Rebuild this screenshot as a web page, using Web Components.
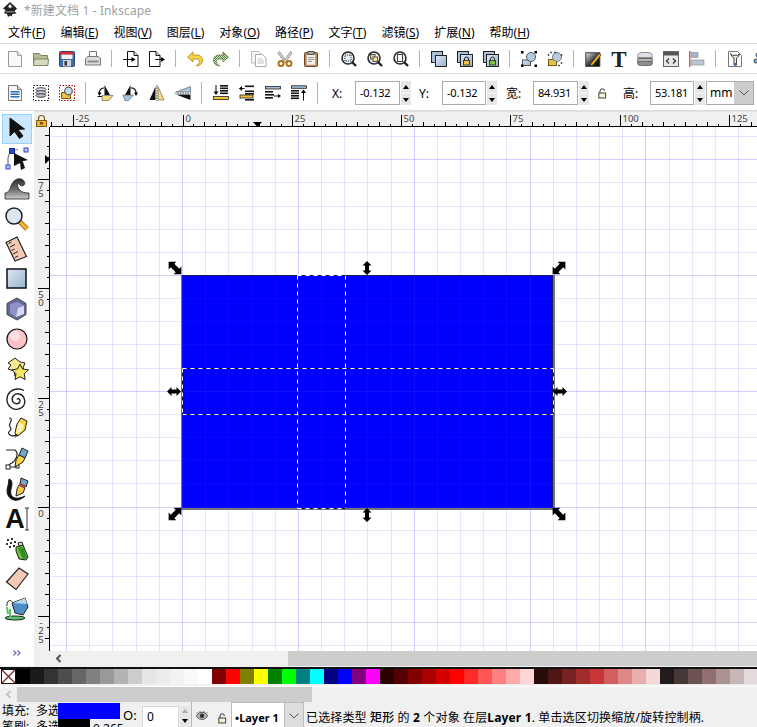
<!DOCTYPE html>
<html lang="zh"><head><meta charset="utf-8"><title>Inkscape</title>
<style>
html,body{margin:0;padding:0;background:#fff}
body{width:757px;height:727px;overflow:hidden;display:flex;flex-direction:column;font:12px "Noto Sans","Noto Sans CJK SC",sans-serif;color:#000}
</style></head><body>
<ink-title>*新建文档 1 - Inkscape</ink-title>
<ink-menubar>
 <ink-menu label="文件" key="F"></ink-menu><ink-menu label="编辑" key="E"></ink-menu><ink-menu label="视图" key="V"></ink-menu><ink-menu label="图层" key="L"></ink-menu><ink-menu label="对象" key="O"></ink-menu><ink-menu label="路径" key="P"></ink-menu><ink-menu label="文字" key="T"></ink-menu><ink-menu label="滤镜" key="S"></ink-menu><ink-menu label="扩展" key="N"></ink-menu><ink-menu label="帮助" key="H"></ink-menu>
</ink-menubar>
<ink-toolbar style="height:29px">
 <ink-ti n="new"></ink-ti><ink-ti n="open"></ink-ti><ink-ti n="save"></ink-ti><ink-ti n="print"></ink-ti><ink-sep></ink-sep>
 <ink-ti n="import"></ink-ti><ink-ti n="export"></ink-ti><ink-sep></ink-sep>
 <ink-ti n="undo"></ink-ti><ink-ti n="redo"></ink-ti><ink-sep></ink-sep>
 <ink-ti n="copy"></ink-ti><ink-ti n="cut"></ink-ti><ink-ti n="paste"></ink-ti><ink-sep></ink-sep>
 <ink-ti n="zsel"></ink-ti><ink-ti n="zdraw"></ink-ti><ink-ti n="zpage"></ink-ti><ink-sep></ink-sep>
 <ink-ti n="dup"></ink-ti><ink-ti n="clone"></ink-ti><ink-ti n="unlink"></ink-ti><ink-sep></ink-sep>
 <ink-ti n="group"></ink-ti><ink-ti n="ungroup"></ink-ti><ink-sep></ink-sep>
 <ink-ti n="fs"></ink-ti><ink-ti n="text"></ink-ti><ink-ti n="layers"></ink-ti><ink-ti n="xml"></ink-ti><ink-ti n="align"></ink-ti><ink-sep></ink-sep>
 <ink-ti n="prefs"></ink-ti><ink-ti n="more"></ink-ti>
</ink-toolbar>
<ink-toolbar style="height:34px;padding-top:2px" data-second>
 <ink-ti n="selall"></ink-ti><ink-ti n="sellayers"></ink-ti><ink-ti n="selsame"></ink-ti><ink-sep tall></ink-sep>
 <ink-ti n="rotl"></ink-ti><ink-ti n="rotr"></ink-ti><ink-ti n="fliph"></ink-ti><ink-ti n="flipv"></ink-ti><ink-sep tall></ink-sep>
 <ink-ti n="top"></ink-ti><ink-ti n="raise"></ink-ti><ink-ti n="lower"></ink-ti><ink-ti n="bottom"></ink-ti><ink-sep tall></ink-sep>
 <ink-field label="X:" value="-0.132" lw="23" w="45" ml="8"></ink-field>
 <ink-field label="Y:" value="-0.132" lw="23" w="44" ml="8"></ink-field>
 <ink-field label="宽:" value="84.931" lw="27" w="45" ml="9"></ink-field>
 <ink-ti n="lock" style="width:24px;margin-left:1px"></ink-ti>
 <ink-field label="高:" value="53.181" lw="27" w="44" ml="9"></ink-field>
 <ink-combo value="mm" w="27" aw="19"></ink-combo>
</ink-toolbar>
<ink-workspace></ink-workspace>
<ink-palette></ink-palette>
<ink-hscroll disabled thumb-left="17" thumb-width="295" style="background:#f0f0f0"></ink-hscroll>
<ink-status></ink-status>
<script>
const grad=`<defs>
<linearGradient id="b" x1="0" y1="0" x2="1" y2="1"><stop offset="0" stop-color="#dfe8f2"/><stop offset="1" stop-color="#94b2cf"/></linearGradient>
<linearGradient id="k" x1="0" y1="0" x2="1" y2="1"><stop offset="0" stop-color="#eee"/><stop offset=".55" stop-color="#333"/><stop offset="1" stop-color="#000"/></linearGradient>
<linearGradient id="g" x1="0" y1="0" x2="0" y2="1"><stop offset="0" stop-color="#333"/><stop offset=".5" stop-color="#666"/><stop offset="1" stop-color="#ccc"/></linearGradient>
<pattern id="d" width="2" height="2" patternUnits="userSpaceOnUse"><rect width="2" height="2" fill="#dfe8d0"/><rect width="1" height="1" fill="#4e7a36"/><rect x="1" y="1" width="1" height="1" fill="#4e7a36"/></pattern>
</defs>`;
const lockI=(x,y,c)=>`<path d="M${x+1.5} ${y+3}v-1.5a2 2 0 0 1 4 0V${y+3}" fill="none" stroke="#222"/><rect x="${x+.5}" y="${y+3}" width="6" height="4.5" fill="${c}" stroke="#222" stroke-width=".8"/>`;
const mag=(inner)=>`<path d="M10.5 10.5l4.5 4.5" stroke="#222" stroke-width="2.4"/><circle cx="7" cy="7" r="6" fill="#e6edf3" stroke="#222" stroke-width="1.5"/>${inner}`;
const I={
new:`<path d="M1.5.5h9l4 4v11h-13z" fill="#f9f9f9" stroke="#999"/><path d="M10.5.5v4h4" fill="#e4e4e4" stroke="#aaa"/>`,
open:`<path d="M.5 14V2.500h6l1.500 2h6.500v9.500z" fill="#b5bc98" stroke="#7d8468"/><path d="M.5 14.500l.6-6.500h14.400l-.6 6.500z" fill="#d6dabf" stroke="#7d8468"/>`,
save:`<rect x=".5" y=".5" width="15" height="15" rx="1" fill="#3f6dae" stroke="#24467c"/><rect x="1" y="1" width="14" height="2.600" fill="#dc2a2e"/><rect x="2.500" y="3.600" width="11" height="4.400" fill="#f2f2f2"/><rect x="4" y="9" width="8" height="6.500" fill="#cfd3d8"/><rect x="5.500" y="10" width="2.500" height="4.500" fill="#333"/>`,
print:`<path d="M4.500.5h7v5h-7z" fill="#fff" stroke="#777"/><path d="M.5 7.500l2.500-2h10l2.500 2v6.500H.5z" fill="#dcdcdc" stroke="#777"/><rect x="2.500" y="9.500" width="11" height="2" fill="#8a8a8a"/>`,
import:`<path d="M4.500.5h6.500l4 4v11H4.500z" fill="#fff" stroke="#111"/><path d="M11 .5v4h4" fill="#ddd" stroke="#111"/><path d="M0 8.500h10" stroke="#111"/><path d="M8.500 6l4 2.500-4 2.500z"/>`,
export:`<path d="M.5.5h6.500l4 4v11H.5z" fill="#fff" stroke="#111"/><path d="M7 .5v4h4" fill="#ddd" stroke="#111"/><path d="M6 8.500h7" stroke="#111"/><path d="M12 6l4 2.500-4 2.500z"/>`,
undo:`<path d="M6 .8L.6 6.200 6 11V8h3.500c2 0 3 1 3 2.400s-1 3-3.200 4.400c4 0 6.200-2.800 6.200-5.500C15.500 6 13 4 9.500 4H6z" fill="#f3d247" stroke="#b7991c"/>`,
redo:`<path d="M10 .8l5.400 5.400L10 11V8H6.500c-2 0-3 1-3 2.400s1 3 3.200 4.400C2.700 14.800.5 12 .5 9.300.5 6 3 4 6.500 4H10z" fill="url(#d)" stroke="#6f8f58"/>`,
copy:`<path d="M.5.5h7l2.500 2.500v9H.5z" fill="#f6f6f6" stroke="#bbb"/><path d="M4.500 3.500h7l3.500 3.500v8.500H4.500z" fill="#fff" stroke="#aaa"/><path d="M6.500 8h5M6.500 10h6.500M6.500 12h6.500" stroke="#c4c4c4"/>`,
cut:`<path d="M2.500.5L9.500 10.500 7.500 11.500 1 2z" fill="#d0d0d0" stroke="#999"/><path d="M13.500.5L6.500 10.500 8.500 11.500 15 2z" fill="#d8d8d8" stroke="#999"/><circle cx="4" cy="12.500" r="2.500" fill="#fff" stroke="#b2701b" stroke-width="2"/><circle cx="12" cy="12.500" r="2.500" fill="#fff" stroke="#b2701b" stroke-width="2"/>`,
paste:`<rect x="1.500" y="1.500" width="13" height="14" rx="1" fill="#b58a55" stroke="#6e4a20"/><rect x="3.500" y="3.500" width="9" height="10.500" fill="#f5f1e6" stroke="#a89a80" stroke-width=".5"/><rect x="5" y=".5" width="6" height="3" fill="#aaa" stroke="#555"/><path d="M5 6.500h6M5 8.500h6M5 10.500h4" stroke="#999"/>`,
zsel:mag(`<rect x="4" y="4" width="6" height="6" fill="none" stroke="#222" stroke-dasharray="1 1"/>`),
zdraw:mag(`<rect x="3.500" y="3.500" width="4.500" height="4.500" fill="#f0d060" stroke="#555"/><rect x="6" y="6" width="4.500" height="4.500" fill="#f4e8a0" stroke="#555"/>`),
zpage:mag(`<rect x="4.500" y="3.500" width="5" height="7" fill="#fff" stroke="#444"/>`),
dup:`<rect x=".5" y=".5" width="11" height="11" fill="#a7c0d8" stroke="#222"/><rect x="4.500" y="4.500" width="11" height="11" fill="url(#b)" stroke="#222"/>`,
clone:`<rect x=".5" y=".5" width="11" height="11" fill="#a7c0d8" stroke="#222"/><rect x="3.500" y="3.500" width="12" height="12" fill="url(#b)" stroke="#222"/>${lockI(6,6.5,'#f2c63c')}`,
unlink:`<rect x=".5" y=".5" width="11" height="11" fill="#a7c0d8" stroke="#222"/><rect x="3.500" y="3.500" width="12" height="12" fill="url(#b)" stroke="#222"/>${lockI(6,6.5,'#7fc241')}`,
group:`<rect x="1.500" y="9" width="8" height="5.500" fill="url(#b)" stroke="#555"/><circle cx="10" cy="6" r="4.500" fill="#b5cbe0" stroke="#555"/><path d="M0 0h2.500v2.500H0zM13.500 0H16v2.500h-2.500zM0 13.500h2.500V16H0zM13.500 13.500H16V16h-2.500z"/>`,
ungroup:`<rect x="1.500" y="8.500" width="8" height="6" fill="#e8c04a" stroke="#6a5a20"/><circle cx="10" cy="6" r="4.500" fill="#b5cbe0" stroke="#777"/><path d="M3 1.500h2M7 1.500h2M1.500 3v2M14.500 3v2M14.500 11v2M11 14.500h2" stroke="#555" stroke-width="1.500"/>`,
fs:`<rect x=".8" y="1.800" width="14" height="13.500" fill="url(#k)" stroke="#333"/><path d="M6 12.500L14 2.500l2 1.500-8 10-3 1z" fill="#f2b21d" stroke="#222" stroke-width=".6"/>`,
text:`<text x="8" y="15.500" text-anchor="middle" font-family="Liberation Serif" font-weight="700" font-size="23" fill="#222">T</text>`,
layers:`<path d="M.8 4.500C.8 2.500 3 1.500 6 1.500h4c3 0 5.200 1 5.200 3v2H.8z" fill="#dce2e8" stroke="#8a8a8a"/><path d="M.8 7.500h14.400v3H.8z" fill="#b5b5b5" stroke="#6a6a6a"/><path d="M.8 10.500h14.400V13c0 1-2 1.500-4 1.500H4.800c-2 0-4-.5-4-1.500z" fill="#8f8f8f" stroke="#6a6a6a"/>`,
xml:`<rect x=".5" y=".5" width="15" height="15" fill="#e7e7e7" stroke="#666"/><rect x="1" y="1" width="14" height="3.500" fill="#555"/><path d="M6 7.500L3.500 10 6 12.500M10 7.500l2.500 2.500-2.500 2.500" fill="none" stroke="#333" stroke-width="1.200"/>`,
align:`<rect x="0" y="0" width="1.500" height="16" fill="#e25c5c"/><rect x="2" y="1.500" width="7" height="5" fill="#9fb8ce" stroke="#888" stroke-width=".6"/><rect x="2" y="9" width="13" height="5" fill="#b8c8d6" stroke="#888" stroke-width=".6"/>`,
prefs:`<path d="M1.500.5h9l4 4v11h-13z" fill="#fff" stroke="#777"/><path d="M3.500 2.500l1.500 3 2 1.500v7h2.500V7l2-1.500 1.200-3-2 1.800H5.500z" fill="#e8e8e8" stroke="#333" stroke-width=".9"/><path d="M7 12h2.500v2.500H7z" fill="#2d67b2"/>`,
more:`<circle cx="5" cy="4" r="2" fill="#8fb4d8" stroke="#345"/><circle cx="3" cy="10" r="2" fill="#8fb4d8" stroke="#345"/><circle cx="8" cy="13" r="2" fill="#8fb4d8" stroke="#345"/>`,
lock:`<g transform="translate(4 3)"><path d="M2 5V3a2.200 2.200 0 0 1 4.400 0" fill="none" stroke="#333"/><rect x=".8" y="5" width="6.800" height="5" fill="#f6efcf" stroke="#444"/></g>`,
eye:`<path d="M.5 8c2-3.500 4-5 7.500-5s5.500 1.500 7.500 5c-2 3-4 4.500-7.500 4.500S2.500 11 .5 8z" fill="#bbb" stroke="#333"/><circle cx="8" cy="7.500" r="3" fill="#333"/><path d="M1 3l2 2M5 1.500l1 2.500M11 1.500L10 4M15 3l-2 2" stroke="#333"/>`,
selall:`<path d="M1.500.5h9l4 4v11h-13z" fill="#f4f6f8" stroke="#777"/><path d="M10.500.5v4h4" fill="#d0d6dc" stroke="#777"/><path d="M3.500 6h9v1.500h-9zM3.500 8.500h9V10h-9zM3.500 11h9v1.500h-9z" fill="#2e6cb4"/>`,
sellayers:`<rect x=".5" y=".5" width="15" height="15" fill="none" stroke="#111" stroke-dasharray="1.500 1.500"/><ellipse cx="8" cy="4.500" rx="5" ry="1.800" fill="#dde" stroke="#444"/><ellipse cx="8" cy="7.500" rx="5" ry="1.800" fill="#ccd" stroke="#444"/><ellipse cx="8" cy="10.500" rx="5" ry="1.800" fill="#bbc" stroke="#444"/>`,
selsame:`<rect x=".5" y=".5" width="15" height="15" fill="none" stroke="#c00000" stroke-dasharray="1.500 1.500"/><path d="M2.500 7.500h5l1 1h3v5h-9z" fill="#f0c040" stroke="#7a5a14"/><circle cx="9.500" cy="6" r="3.800" fill="#c6d9ea" stroke="#555" stroke-width="1.200"/>`,
rotl:`<path d="M7.500 0L13 10H7.500z" fill="#111"/><path d="M5 10.500h11l-4 5H5z" fill="#f4da7e" stroke="#555" stroke-width=".6"/><path d="M7 3A4.500 4.500 0 0 0 2.500 9" fill="none" stroke="#111" stroke-width="1.200"/><path d="M.5 7.500h4L2.500 11z"/><path d="M.5 11.500h4.500" stroke="#111"/>`,
rotr:`<path d="M7.500 0L2 10h5.500z" fill="#111"/><path d="M0 10h10.500l-5 5.500H2z" fill="#a9c4dd" stroke="#555" stroke-width=".6"/><path d="M8 3a4.500 4.500 0 0 1 5 5" fill="none" stroke="#111" stroke-width="1.200"/><path d="M11 7.500h4L13 11z"/>`,
fliph:`<path d="M6.500 1.500V15H.5z" fill="#111"/><path d="M9 1.500V15h6z" fill="#f4da7e" stroke="#555" stroke-width=".6"/><path d="M7.800 0v16" stroke="#555" stroke-dasharray="1.500 1"/>`,
flipv:`<path d="M15.500 1.500V7H1z" fill="#a9c4dd" stroke="#555" stroke-width=".6"/><path d="M15.500 15V9.500H1z" fill="#111"/><path d="M0 8.200h16" stroke="#555" stroke-dasharray="1.500 1"/>`,
top:`<path d="M3 0v8" stroke="#111"/><path d="M.5 6.500h5L3 10z"/>${[0,2.5,5,7.5].map(o=>`<rect x="7" y="${o}" width="8" height="1.600" fill="#111"/>`).join('')}<rect x=".5" y="11.500" width="15" height="3" fill="#f0c33c" stroke="#222" stroke-width=".8"/>`,
raise:`<path d="M.5 3.500h5" stroke="#111"/><path d="M3 1L0 3.500 3 6z"/>${[0,5,7.5].map(o=>`<rect x="6" y="${o+.5}" width="9" height="1.600" fill="#111"/>`).join('')}<rect x="1" y="10" width="13" height="3" fill="#f0c33c" stroke="#222" stroke-width=".8"/><rect x="6" y="14" width="9" height="1.600" fill="#111"/>`,
lower:`<rect x=".5" y="1.500" width="15" height="2.500" fill="#9fbdd8" stroke="#222" stroke-width=".8"/>${[6,9,12].map((o,i)=>`<rect x="0" y="${o}" width="${i==1?9:8}" height="1.600" fill="#111"/>`).join('')}<path d="M9 11h4" stroke="#111"/><path d="M13 9v4l3-2z"/>`,
bottom:`<rect x=".5" y=".8" width="15" height="2.500" fill="#9fbdd8" stroke="#222" stroke-width=".8"/>${[5,7.5,10,12.5].map(o=>`<rect x="0" y="${o}" width="8" height="1.600" fill="#111"/>`).join('')}<path d="M12.500 7v8.500" stroke="#111"/><path d="M10 8l2.500-3.500L15 8z"/>`,
padlock:`<path d="M2.500 6V3.500a3 3 0 0 1 6 0V6" fill="none" stroke="#7a5a14" stroke-width="1.200"/><rect x=".5" y="5.500" width="10" height="6" fill="#eeb52e" stroke="#7a5a14"/><rect x="4" y="7" width="3" height="2.500" fill="#7a4a10"/>`,
t_sel:`<path d="M5 1l0 18 4.500-4.500 5 7 3.500-2.500-5-6.500 6.500-.5z" fill="#111" stroke="#111"/>`,
t_node:`<path d="M3 21V12C3 6.500 7 3 13 2.500" fill="none" stroke="#777" stroke-width="1.200"/><rect x="4.500" y="1.500" width="5" height="5" fill="#2a49d8" stroke="#1a2a8a"/><rect x="1" y="18" width="4" height="4" fill="#b8c4ff" stroke="#3344cc"/><rect x="19" y="1" width="4" height="4" fill="#b8c4ff" stroke="#3344cc"/><path d="M9 6l14 7-6 1.500 1 .5 2 6-4 2-1-7-6 3z" fill="#111"/>`,
t_tweak:`<path d="M0 16C3 16 5 13 6 9 8 3 13 1 16 2c3 1 5 4 3 6-2 2-4 0-5-1-2-1-2 2 0 5 2 3 5 4 10 4v6H0z" fill="url(#g)" stroke="#222" stroke-width=".8"/>`,
t_zoom:`<path d="M14 14l8 8" stroke="#a86f10" stroke-width="5"/><path d="M15 15l7 7" stroke="#f5b531" stroke-width="3"/><circle cx="9" cy="9" r="8" fill="#dbe7f2" stroke="#222" stroke-width="1.500"/>`,
t_measure:`<path d="M1 5.500L12 0l9.500 19.500L10 24z" fill="#f3c9b2" stroke="#222" stroke-width="1.200"/><path d="M3.500 6.500l3-1.500M5 10l5-2.500M6.500 13.500l3-1.500M8 17l5-2.500M10 20.500l3-1.500" stroke="#222"/>`,
t_rect:`<rect x="2" y="2" width="19" height="19" fill="url(#b)" stroke="#111" stroke-width="1.500"/>`,
t_3d:`<path d="M12 1l9 5.500v11L12 23l-10-5.500V6.500z" fill="#666a96" stroke="#444"/><path d="M5 7l8-2 6 3.500v8.500l-8 3-6-4z" fill="#8f93c8"/><path d="M13 11l6-2v8l-8 3z" fill="#d7d9f0"/>`,
t_circle:`<circle cx="12" cy="12" r="10" fill="#fbc2c8" stroke="#111" stroke-width="1.200"/><circle cx="10" cy="9" r="5" fill="#fde0e3"/>`,
t_star:`<path d="M3 6l7-5 5 4 5 1-2 5 2 3-7 1-3 4-1-5-6-2 3-4z" fill="#f5ec90" stroke="#222"/><path d="M15 7l2.500 5 6 .8-4.300 4 1 5.700-5.200-2.700-5 2.700 1-5.700-4-4 5.500-.8z" fill="#f7e862" stroke="#222"/>`,
t_spiral:`<path d="M12 12.500c1-2 3.500-.5 3 2-1 3-6 3-7.500-.5-1.500-4.500 2.500-8 6.500-7 5 1 7 6.500 5 11-2 4-9 6-13 2.500C.5 16.500 1 9 5 5 8.500 1.500 15 1 19 3.500" fill="none" stroke="#222" stroke-width="1.400"/>`,
t_pencil:`<path d="M4 1c3 0 3 2 1 5s1 4 1 6-5 3-1 6 9-1 12-3" fill="none" stroke="#222" stroke-width="1.200"/><path d="M16 1l6 3-2 9-7 6-2-1-1-2 2-9z" fill="#f7d23c" stroke="#222"/><path d="M14 5l5 3-2 6-6 3 1-6z" fill="#fff3b8"/><path d="M11 17l2 1-3 3z" fill="#222"/>`,
t_pen:`<path d="M1 3h9c5 4 0 12-5 14-2 .8-1 3-1 3" fill="none" stroke="#222" stroke-width="1.200"/><rect x="1" y="18" width="4" height="4" fill="#fff" stroke="#222"/><rect x="11" y="18" width="3" height="3" fill="#fff" stroke="#222"/><path d="M5 20h6" stroke="#222"/><path d="M17 1l6 3-3 7-6-3z" fill="#6fa7c8" stroke="#222"/><path d="M14 8l6 3-2 4-8 5 1-7z" fill="#f6d347" stroke="#222"/>`,
t_call:`<path d="M4 2c4 1 3 6 2 10s0 8 4 9c3 .8 7-.5 10-2-3 3-8 5-11 4C2 21 1 14 3 9c.7-2 .5-5 1-7z" fill="#111" stroke="#111"/><path d="M16 1l7 3-2 6-6-3z" fill="#6fa7c8" stroke="#222"/><path d="M14.500 6l7 3-.6 1.200-7-3z" fill="#c8202a"/><path d="M14 8l6 3-2 5-7 3 1-7z" fill="#f3ca3c" stroke="#222"/>`,
t_text:`<text x="10" y="21" text-anchor="middle" font-family="Liberation Sans" font-weight="700" font-size="27" fill="#111">A</text><path d="M22 1v22M20 1h4M20 23h4" stroke="#333" fill="none"/>`,
t_spray:`<path d="M11 10l7-2 5 12-2 3-7-1-3-8z" fill="#6ec13d" stroke="#222"/><path d="M13 11l5-1 4 11-4 1z" fill="#2f8f24"/><path d="M13 6l4-1 1 3-4 1z" fill="#ddd" stroke="#222"/><path d="M2 2h2v2H2zM6 1h2v2H6zM1 6h2v2H1zM5 5h2v2H5zM9 4h2v2H9zM4 9h2v2H4zM8 8h2v2H8z" fill="#333"/>`,
t_erase:`<path d="M1.500 15L14 1l9 6-12 15.500z" fill="#f4c9b8" stroke="#222" stroke-width="1.200"/>`,
t_fill:`<ellipse cx="10" cy="21" rx="10" ry="2" fill="#57c267" stroke="#222"/><path d="M2 10l1 7M5 12v8" stroke="#57c267" stroke-width="2"/><path d="M7 6l13-5 3 9-5 8-8-2z" fill="#4d8fc4" stroke="#222"/><path d="M8 6l12-5 2 6z" fill="#bcd8ec"/><path d="M7 5C5 1 1 5 2 9" fill="none" stroke="#222"/>`
};
function def(name,tpl,extra={}){
 const t=document.createElement('template');t.innerHTML=tpl;
 customElements.define(name,class extends HTMLElement{
  constructor(){super();this.attachShadow({mode:'open'}).appendChild(t.content.cloneNode(true));}
  connectedCallback(){extra.init&&extra.init.call(this,this.shadowRoot);}
 });
}
def('ink-icon',`<style>:host{display:inline-flex;line-height:0}svg{display:block;overflow:visible}</style><svg></svg>`,{init(r){
 const n=this.getAttribute('n');if(!n)return;
 const s=+(this.getAttribute('size')||16),v=+(this.getAttribute('box')||s),svg=r.querySelector('svg');
 svg.setAttribute('width',s);svg.setAttribute('height',s);svg.setAttribute('viewBox',`0 0 ${v} ${v}`);
 svg.innerHTML=grad+I[n];
}});
def('ink-ti',`<style>:host{display:flex;flex:none;width:26px;justify-content:center;align-items:center}</style><span></span>`,{init(r){
 const s=r.querySelector('span');s.style.display='contents';
 s.innerHTML=`<ink-icon n="${this.getAttribute('n')}"></ink-icon>`;
}});
def('ink-sep',`<style>:host{display:block;flex:none;width:1px;height:17px;margin:0 6px 0 5px;background:#b4b4b4}:host([tall]){height:22px}</style>`);
def('ink-title',`<style>:host{display:flex;flex:none;height:21px;box-sizing:border-box;padding-bottom:1px;align-items:center;color:#a0a0a0;font:12px "Noto Sans","Noto Sans CJK SC",sans-serif;letter-spacing:.12px;background:#fff}
 svg{margin:0 6px 0 2px;flex:none}</style>
 <svg width="16" height="16" viewBox="0 0 16 16"><path d="M8 0L15 6.500 12.500 9l2 2.500-4 .5-1 2.500-1.500-1-2 1.500-1-3-3-1L3.500 8 1 6.500z" fill="#222"/><path d="M8 2L5.500 5.500 7 5l1 1.500L9.500 5l1.200.8z" fill="#fff"/><path d="M3 9h10l-1 1.500H4z" fill="#777"/></svg><span><slot></slot></span>`);
def('ink-menubar',`<style>:host{display:flex;flex:none;height:22px;padding-left:.5px;box-sizing:content-box;border-bottom:1px solid #dcdcdc;background:#fff}</style><slot></slot>`);
def('ink-menu',`<style>:host{display:block;padding:3px 7.500px 0;flex:none;white-space:nowrap;font-size:12px;line-height:18px}</style><span></span><span>(<u></u>)</span>`,{init(r){
 r.querySelector('span').textContent=this.getAttribute('label');r.querySelector('u').textContent=this.getAttribute('key');
}});
def('ink-toolbar',`<style>:host{display:flex;flex:none;align-items:center;padding-left:2px;background:#fff;border-bottom:1px solid #dcdcdc;overflow:hidden}</style><slot></slot>`);
const spinT=`<span class="spin"><i class="u"></i><i class="d"></i></span>`;
def('ink-field',`<style>:host{display:flex;flex:none;align-items:center;font-size:12px}
 .l{flex:none}.i{box-sizing:border-box;height:24px;border:1px solid #ababab;padding-left:4px;background:#fff;line-height:22px;flex:none;font-size:11px;letter-spacing:-.2px}
 .spin{display:flex;flex-direction:column;justify-content:space-between;width:10px;height:24px;margin:0 0 0 1px;background:#f0f0f0}
 .spin i{display:flex;height:11px;align-items:center;justify-content:center;background:#e6e6e6}
 .spin i::after{content:"";border:3.500px solid transparent;}
 .u::after{border-bottom:4px solid #000!important;border-top-width:0!important}
 .d::after{border-top:4px solid #000!important;border-bottom-width:0!important}
 </style><span class="l"></span><span class="i"></span>${spinT}`,{init(r){
 const l=r.querySelector('.l'),i=r.querySelector('.i');
 l.textContent=this.getAttribute('label');l.style.width=this.getAttribute('lw')+'px';
 i.textContent=this.getAttribute('value');i.style.width=(+this.getAttribute('w'))+'px';
 this.style.marginLeft=this.getAttribute('ml')+'px';
}});
const chev=`<svg width="10" height="6" viewBox="0 0 10 6"><path d="M.5.5L5 5 9.500.5" fill="none" stroke="#555"/></svg>`;
def('ink-combo',`<style>:host{display:flex;flex:none;height:24px;margin-left:1px;box-sizing:border-box;border:1px solid #ababab;background:#fff;font-size:12px;line-height:22px}
 .v{padding-left:3px;box-sizing:border-box}.a{display:flex;align-items:center;justify-content:center;background:#ccc;box-sizing:border-box}</style>
 <span class="v"></span><span class="a">${chev}</span>`,{init(r){
 r.querySelector('.v').textContent=this.getAttribute('value');
 r.querySelector('.v').style.width=this.getAttribute('w')+'px';
 r.querySelector('.a').style.width=this.getAttribute('aw')+'px';
}});
def('ink-toolbox',`<style>:host{display:flex;flex-direction:column;align-items:center;background:#fff;width:34px;padding-top:3px;box-sizing:border-box}
 .t{box-sizing:border-box;width:30px;height:30px;flex:none;display:flex;align-items:center;justify-content:center;border:1px solid transparent}
 .t.on{background:#cce8ff;border-color:#99d1ff}
 .more{margin-top:auto;line-height:0;padding-bottom:10px}</style>
 <div id="l" style="display:contents"></div><div class="more"><svg width="8" height="6" viewBox="0 0 8 6"><path d="M.5.5L3 3 .5 5.500M4.500.5L7 3 4.500 5.500" fill="none" stroke="#6c6cb8" stroke-width="1.300"/></svg></div>`,{init(r){
 const l=r.getElementById('l');
 ['sel','node','tweak','zoom','measure','rect','3d','circle','star','spiral','pencil','pen','call','text','spray','erase','fill'].forEach((n,i)=>{
  const d=document.createElement('div');d.className='t'+(i?'':' on');
  d.innerHTML=`<ink-icon n="t_${n}" size="24"></ink-icon>`;l.appendChild(d);
 });
}});
def('ink-hruler',`<style>:host{display:block;position:relative;overflow:hidden;background:#f0f0f0;border-top:1px solid #e2e2e2;box-sizing:border-box}
 svg{position:absolute;left:0;top:0}
 span{position:absolute;top:2px;font:9.500px/10px "Noto Sans",sans-serif;color:#444}</style><svg width="707" height="15"></svg>`,{init(r){
 const H=15,sv=r.querySelector('svg');let o='';
 for(let k=-12;k<60;k++){const x=Math.round(132.5+k*10.93)+.5;if(x<0||x>707)continue;
  const h=k%10==0?12:(k%2==0?5:3);o+=`<path d="M${x} ${H-h}V${H}" stroke="#000"/>`;
  if(k%10==0){const s=document.createElement('span');s.textContent=String(k*2.5);s.style.left=(x+2)+'px';r.appendChild(s);}
 }
 o+=`<path d="M0 14.500H707" stroke="#000"/><path d="M203 10h9l-4.500 5z" fill="#000"/>`;sv.innerHTML=o;
}});
def('ink-vruler',`<style>:host{display:block;position:relative;overflow:hidden;background:#f0f0f0}
 svg{position:absolute;left:0;top:0}
 span{position:absolute;left:3px;width:8px;text-align:center;font:9.500px/8.500px "Noto Sans",sans-serif;color:#444;white-space:pre-line}</style><svg width="16" height="524"></svg>`,{init(r){
 const sv=r.querySelector('svg');let o='';
 for(let k=-12;k<60;k++){const y=Math.round(380-k*10.93)+.5;if(y<0||y>524)continue;
  const h=k%10==0?12:(k%2==0?5:3);o+=`<path d="M${16-h} ${y}H16" stroke="#000"/>`;
  if(k%10==0){const s=document.createElement('span');s.textContent=String(k*2.5).split('').join('\n');s.style.top=(y+2)+'px';r.appendChild(s);}
 }
 o+=`<path d="M15.500 0V524" stroke="#000"/><path d="M11 28l5 4.500-5 4.500z" fill="#000"/>`;sv.innerHTML=o;
}});
def('ink-canvas',`<style>:host{display:block;overflow:hidden;background:#fff}svg{display:block}</style><svg width="707" height="524" viewBox="50 127 707 524"></svg>`,{init(r){
 const sv=r.querySelector('svg');
 const arrow=(x,y,a,L,H,S)=>`<path transform="translate(${x} ${y}) rotate(${a})" d="M0-${L}L${H}-${L-H}H${S}V${L-H}H${H}L0 ${L}-${H} ${L-H}H-${S}V-${L-H}H-${H}z" fill="#000"/>`;
 const corner=(x,y,a)=>arrow(x,y,a,9,5.5,2.5), edge=(x,y,a)=>arrow(x,y,a,7,4.5,2);
 let g='';
 for(let k=-6;k<30;k++){const x=Math.round(182+k*23.17)+.5,maj=((k%5)+5)%5==0;
  g+=`<path d="M${x} 127V651" stroke="rgb(64,64,255)" stroke-opacity="${maj?.24:.13}"/>`;}
 for(let k=-6;k<25;k++){const y=Math.round(275+k*23.15)+.5,maj=((k%5)+5)%5==0;
  g+=`<path d="M50 ${y}H757" stroke="rgb(64,64,255)" stroke-opacity="${maj?.24:.13}"/>`;}
 const dash=(d)=>`<path d="${d}" fill="none" stroke="#10104a" stroke-width="1"/><path d="${d}" fill="none" stroke="#fff" stroke-width="1" stroke-dasharray="4 4"/>`;
 sv.innerHTML=`
 <rect x="181" y="275" width="374" height="235" fill="#777"/>
 <rect x="182" y="275" width="371" height="233" fill="#0000ff"/>
 ${g}
 <path d="M182.500 275.500H552.500V507.500" fill="none" stroke="#1a1a5a"/>
 ${dash('M297.500 275.500V508.500')}${dash('M345.500 275.500V508.500')}${dash('M182.500 368.500H553.500')}${dash('M182.500 414.500H553.500')}
 ${dash('M297.500 275.500H345.500')}${dash('M297.500 508.500H345.500')}${dash('M182.500 368.500V414.500')}${dash('M553.500 368.500V414.500')}
 ${corner(175,268,-45)}${edge(367,268,0)}${corner(559,268,45)}${edge(174,391.5,90)}${edge(560,391.5,90)}${corner(175,514,45)}${edge(367,515,0)}${corner(559,514,-45)}`;
}});
def('ink-hscroll',`<style>:host{display:block;position:relative;height:15px;background:#f0f0f0;flex:none}
 .th{position:absolute;top:0;bottom:0;background:#cdcdcd}
 .ar{position:absolute;top:0;bottom:0;display:flex;align-items:center}</style>
 <div class="th"></div><div class="ar"><svg width="7" height="9" viewBox="0 0 7 9"><path d="M5.500 1L2 4.500 5.500 8" fill="none" stroke-width="2"/></svg></div>`,{init(r){
 const th=r.querySelector('.th');th.style.left=this.getAttribute('thumb-left')+'px';th.style.width=this.getAttribute('thumb-width')+'px';
 const a=r.querySelector('.ar');a.style.left=this.hasAttribute('disabled')?'5px':'21px';
 r.querySelector('path').setAttribute('stroke',this.hasAttribute('disabled')?'#c4c4c4':'#555');
}});
def('ink-workspace',`<style>:host{display:grid;flex:none;height:555px;grid-template-columns:34px 16px 707px;grid-template-rows:16px 524px 15px}
 ink-toolbox{grid-row:1/4}
 .corner{background:#f0f0f0;border-top:1px solid #e2e2e2;box-sizing:border-box;display:flex;justify-content:center;padding-top:3px;padding-right:1px;height:16px}
 ink-hscroll{grid-column:2/4}</style>
 <ink-toolbox></ink-toolbox><div class="corner"><ink-icon n="padlock" size="11"></ink-icon></div><ink-hruler></ink-hruler>
 <ink-vruler></ink-vruler><ink-canvas></ink-canvas>
 <ink-hscroll thumb-left="254" thumb-width="469"></ink-hscroll>`);
def('ink-palette',`<style>:host{display:block;flex:none;height:21px;box-sizing:border-box;background:#f0f0f0;overflow:hidden;padding-top:1px}
 .r{display:flex;border-top:2px solid #111;box-sizing:border-box;height:17px;padding-left:1px;background:#fff}
 .r i{display:block;flex:none;width:14px;height:15px}
 .x{width:15px!important}
 .w{height:2px;background:#f0f0f0;border-bottom:1px solid #fff}</style>
 <div class="r"><i class="x"><svg width="15" height="15" viewBox="0 0 15 15" style="display:block"><rect x=".5" y=".5" width="14" height="14" fill="#fff" stroke="#111"/><path d="M1 1L14 14M14 1L1 14" stroke="#7a2020" stroke-width="1.200"/></svg></i></div><div class="w"></div>`,{init(r){
 const c='000000 1a1a1a 333333 4d4d4d 666666 808080 999999 b3b3b3 cccccc e6e6e6 ececec f2f2f2 f9f9f9 ffffff 800000 ff0000 808000 ffff00 008000 00ff00 008080 00ffff 000080 0000ff 800080 ff00ff 2b0000 550000 800000 aa0000 d40000 ff0000 ff2a2a ff5555 ff8080 ffaaaa ffd5d5 280b0b 501616 782121 a02c2c c83737 d35f5f de8787 e9afaf f4d7d7 241c1c 483737 6c5353 916f6f ac9393 c8b7b7 e3dbdb'.split(' ');
 const row=r.querySelector('.r');c.forEach(h=>{const i=document.createElement('i');i.style.background='#'+h;row.appendChild(i);});
}});
def('ink-status',`<style>:host{display:flex;flex:none;height:26px;overflow:hidden;background:#f0f0f0;font-size:12px;align-items:flex-start;white-space:nowrap}
 .fs{width:122px;flex:none;display:grid;grid-template-columns:34px 22px auto;grid-auto-rows:16px;padding-top:1px;padding-left:2px;box-sizing:border-box;line-height:16px}
 .fs .c1{width:62px;height:16px;background:#0000ff}.fs .c2{display:flex}.fs .c2 i{width:32px;height:16px;background:#000}.fs .c2 span{margin-left:3px;line-height:18px;margin-top:1px}
 .o{display:flex;align-items:flex-start;flex:none;padding-top:4px;height:26px;box-sizing:border-box}
 .o b{font-weight:400;width:19px;margin-left:1px;font-size:13px;line-height:18px}
 .ib{width:37px;height:26px;box-sizing:border-box;border:1px solid #d8d8d8;background:#fff;padding-left:4px;line-height:20px;font-size:12px}
 .sp{width:10px;margin-left:1px;display:flex;flex-direction:column;height:22px;background:#e6e6e6;align-items:center}
 .sp i{flex:none;width:0;height:0;border:3.500px solid transparent;border-top-width:0;border-bottom:4px solid #aaa;margin:3px 0 6px}
 .sp i+i{border-top:4px solid #000;border-bottom-width:0;margin:0}
 .sep{flex:none;width:1px;height:26px;background:#b4b4b4;margin:0 0 0 1px}
 .ic{flex:none;display:flex;width:20px;justify-content:center;padding-top:8px}
 .ic+.ic{width:19px}
 .cb{flex:none;display:flex;height:26px;box-sizing:border-box;width:73px;background:#fff;border:1px solid #bbb;border-bottom:0;line-height:30px}
 .cb span{flex:1;font-weight:700;font-size:11px;padding-left:3px;white-space:nowrap}
 .cb em{width:18px;background:#ddd;display:flex;align-items:center;justify-content:center;border-left:1px solid #bbb}
 .m{flex:none;padding-left:2px;line-height:32px;letter-spacing:.15px}
 .m b{font-weight:700}.m .s{font-weight:500}</style>
 <div class="fs"><span>填充:</span><span>多选</span><i class="c1"></i>
 <span>笔刷:</span><span>多选</span><span class="c2"><i></i><span>0.265</span></span></div>
 <div class="o"><b>O:</b><div class="ib">0</div><div class="sp"><i></i><i></i></div></div>
 <div class="sep"></div>
 <div class="ic"><ink-icon n="eye" size="12" box="16"></ink-icon></div>
 <div class="ic"><ink-icon n="lock" size="16"></ink-icon></div>
 <div class="cb"><span>•Layer 1</span><em>${chev}</em></div>
 <div class="m">已选择类型 <span class="s">矩形</span> 的 <b>2</b> 个对象 在层<b>Layer 1</b>. 单击选区切换缩放/旋转控制柄.</div>`);
</script>
</body></html>
